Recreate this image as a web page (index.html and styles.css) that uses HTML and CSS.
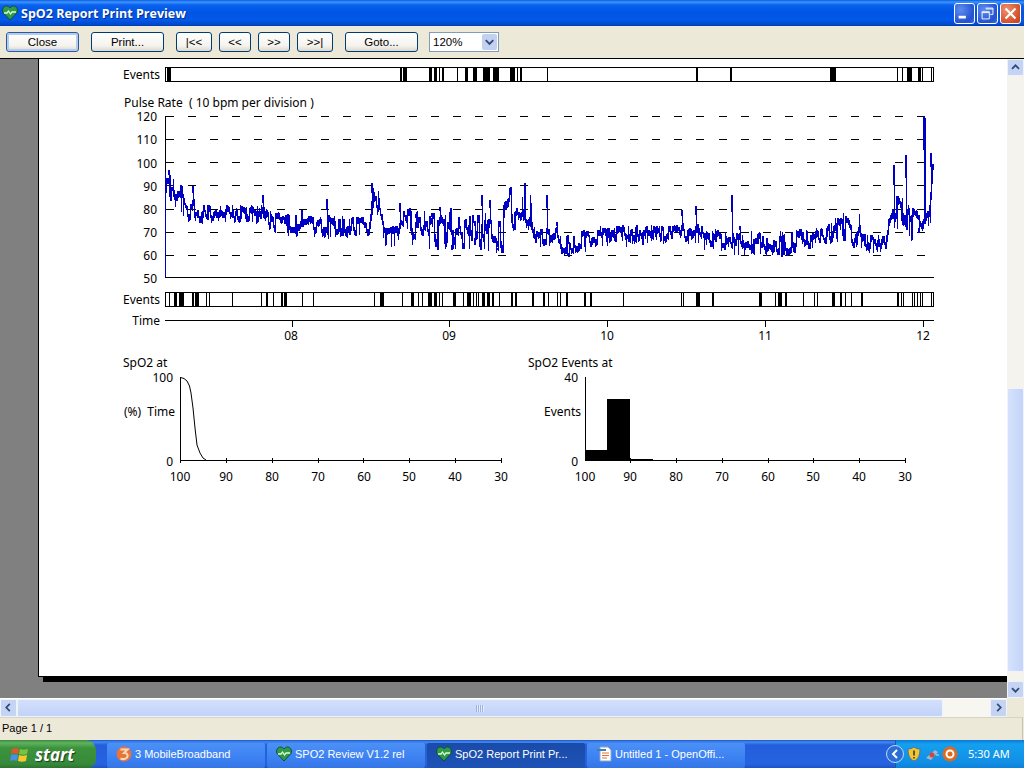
FILE: index.html
```html
<!DOCTYPE html>
<html lang="en">
<head>
<meta charset="utf-8">
<title>SpO2 Report Print Preview</title>
<link rel="stylesheet" href="styles.css">
</head>
<body>
<div class="window">
  <header class="titlebar">
    <svg class="heart" viewBox="0 0 16 16"><path d="M8 15 1 7.500C-.5 4 2 1 4.500 1 6 1 7.300 2 8 3 8.700 2 10 1 11.500 1 14 1 16.500 4 15 7.500Z" fill="#2f9a4c" stroke="#16502e"/><path d="M2 8h3l1.500-2 2 3 1.500-2h4" fill="none" stroke="#d8ffd0" stroke-width="1.300"/></svg>
    <h1 class="title">SpO2 Report Print Preview</h1>
    <div class="winbtns">
      <span class="winbtn"><svg viewBox="0 0 21 21"><rect x="4" y="13" width="8" height="3" fill="#fff"/></svg></span>
      <span class="winbtn"><svg viewBox="0 0 21 21"><path d="M8.500 4.500h8v7h-3M4.500 8.500h8v8h-8z M4.500 9.500h8 M8.500 5.500h8" fill="none" stroke="#fff"/></svg></span>
      <span class="winbtn close"><svg viewBox="0 0 21 21"><path d="M5 5l11 11M16 5 5 16" stroke="#fff" stroke-width="2.400" fill="none"/></svg></span>
    </div>
  </header>

  <nav class="toolbar">
    <button class="btn wide default">Close</button>
    <button class="btn wide">Print...</button>
    <button class="btn first">|&lt;&lt;</button>
    <button class="btn nav">&lt;&lt;</button>
    <button class="btn nav">&gt;&gt;</button>
    <button class="btn last">&gt;&gt;|</button>
    <button class="btn wide">Goto...</button>
    <div class="combo"><span class="combo-val">120%</span><span class="combo-arrow"><svg viewBox="0 0 16 16"><path d="M4 6l4 4 4-4" fill="none" stroke="#2f4a7d" stroke-width="2"/></svg></span></div>
  </nav>

  <main class="viewer">
    <div class="canvas">
      <div class="page">
        <svg class="report" viewBox="40 59 967 617" width="967" height="617">
          <!-- top events -->
          <text class="lbl end" x="160" y="79">Events</text>
          <rect class="box" x="165.500" y="67.500" width="768" height="14"/>
          <path class="evt" d="M167 68h4v13h-4zM400 68h2v13h-2zM403 68h4v13h-4zM429 68h3v13h-3zM434 68h3v13h-3zM439 68h1v13h-1zM442 68h2v13h-2zM457 68h1v13h-1zM465 68h3v13h-3zM473 68h4v13h-4zM483 68h7v13h-7zM493 68h6v13h-6zM510 68h5v13h-5zM517 68h1v13h-1zM520 68h2v13h-2zM547 68h1v13h-1zM696 68h2v13h-2zM730 68h2v13h-2zM830 68h6v13h-6zM897 68h1v13h-1zM902 68h1v13h-1zM907 68h5v13h-5zM918 68h3v13h-3zM922 68h1v13h-1zM931 68h1v13h-1z"/>

          <!-- pulse rate -->
          <text class="lbl pre" x="124" y="107">Pulse Rate  ( 10 bpm per division )</text>
          <g class="lbl end">
            <text x="157" y="121">120</text>
            <text x="157" y="144">110</text>
            <text x="157" y="168">100</text>
            <text x="157" y="191">90</text>
            <text x="157" y="214">80</text>
            <text x="157" y="237">70</text>
            <text x="157" y="260">60</text>
            <text x="157" y="283">50</text>
          </g>
          <path class="dash" d="M166 116.500H933M166 139.500H933M166 162.500H933M166 185.500H933M166 209.500H933M166 232.500H933M166 255.500H933"/>
          <path class="axis" d="M165.500 116V278M165 277.500H934"/>
          <polyline id="trace" class="trace" points=""/>

          <!-- lower events -->
          <text class="lbl end" x="160" y="304">Events</text>
          <rect class="box" x="165.500" y="292.500" width="768" height="14"/>
          <path class="evt" d="M169 293h1v13h-1zM174 293h3v13h-3zM179 293h5v13h-5zM192 293h2v13h-2zM195 293h4v13h-4zM206 293h1v13h-1zM209 293h1v13h-1zM232 293h1v13h-1zM261 293h1v13h-1zM266 293h2v13h-2zM273 293h1v13h-1zM281 293h2v13h-2zM284 293h3v13h-3zM302 293h1v13h-1zM313 293h1v13h-1zM374 293h1v13h-1zM380 293h4v13h-4zM402 293h1v13h-1zM411 293h3v13h-3zM418 293h1v13h-1zM422 293h1v13h-1zM428 293h4v13h-4zM434 293h3v13h-3zM439 293h1v13h-1zM442 293h1v13h-1zM453 293h3v13h-3zM463 293h1v13h-1zM467 293h4v13h-4zM473 293h1v13h-1zM476 293h1v13h-1zM478 293h1v13h-1zM482 293h3v13h-3zM487 293h3v13h-3zM492 293h2v13h-2zM499 293h1v13h-1zM511 293h2v13h-2zM515 293h2v13h-2zM532 293h2v13h-2zM543 293h2v13h-2zM548 293h1v13h-1zM557 293h1v13h-1zM560 293h1v13h-1zM566 293h2v13h-2zM584 293h2v13h-2zM590 293h2v13h-2zM623 293h1v13h-1zM681 293h1v13h-1zM683 293h1v13h-1zM696 293h4v13h-4zM712 293h2v13h-2zM759 293h3v13h-3zM775 293h1v13h-1zM778 293h4v13h-4zM785 293h2v13h-2zM803 293h1v13h-1zM814 293h1v13h-1zM817 293h1v13h-1zM832 293h3v13h-3zM840 293h2v13h-2zM845 293h1v13h-1zM851 293h1v13h-1zM861 293h2v13h-2zM897 293h2v13h-2zM901 293h1v13h-1zM903 293h1v13h-1zM912 293h1v13h-1zM914 293h1v13h-1zM917 293h1v13h-1zM920 293h1v13h-1zM922 293h1v13h-1zM931 293h1v13h-1z"/>

          <!-- time -->
          <text class="lbl end" x="160" y="325">Time</text>
          <path class="axis" d="M165 320.500H934M292.500 320V327M449.500 320V327M607.500 320V327M765.500 320V327M923.500 320V327"/>
          <g class="lbl mid">
            <text x="291" y="340">08</text>
            <text x="449" y="340">09</text>
            <text x="607" y="340">10</text>
            <text x="765" y="340">11</text>
            <text x="923" y="340">12</text>
          </g>

          <!-- SpO2 at -->
          <text class="lbl" x="123" y="367">SpO2 at</text>
          <g class="lbl end">
            <text x="173" y="382">100</text>
            <text class="spaced" x="175" y="416">(%) Time</text>
            <text x="173" y="466">0</text>
          </g>
          <path class="axis" d="M180.500 377V461M180 460.500H501.500M226.500 458V463M272.500 458V463M318.500 458V463M363.500 458V463M409.500 458V463M455.500 458V463M501.500 458V463M180.500 458V463"/>
          <path class="curve" d="M180.500 377.500 184 378.500 187 381 189.500 386 191 393 193 408 195 428 197 445 200 453 203 458 206 460"/>
          <g class="lbl mid">
            <text x="180" y="481">100</text>
            <text x="226" y="481">90</text>
            <text x="272" y="481">80</text>
            <text x="318" y="481">70</text>
            <text x="364" y="481">60</text>
            <text x="409" y="481">50</text>
            <text x="455" y="481">40</text>
            <text x="501" y="481">30</text>
          </g>

          <!-- SpO2 events -->
          <text class="lbl" x="528" y="367">SpO2 Events at</text>
          <g class="lbl end">
            <text x="578" y="382">40</text>
            <text x="581" y="416">Events</text>
            <text x="578" y="466">0</text>
          </g>
          <path class="axis" d="M585.500 377V461M585 460.500H905.500M630.500 458V463M676.500 458V463M722.500 458V463M768.500 458V463M813.500 458V463M859.500 458V463M905.500 458V463"/>
          <path class="evt" d="M585 450h22v10h-22zM607 399h23v61h-23zM630 459h23v1h-23z"/>
          <g class="lbl mid">
            <text x="585" y="481">100</text>
            <text x="630" y="481">90</text>
            <text x="676" y="481">80</text>
            <text x="722" y="481">70</text>
            <text x="768" y="481">60</text>
            <text x="813" y="481">50</text>
            <text x="859" y="481">40</text>
            <text x="905" y="481">30</text>
          </g>
        </svg>
      </div>
    </div>
    <div class="vscroll">
      <span class="sbtn"><svg viewBox="0 0 17 17"><path d="M4.500 10 8.500 6l4 4" fill="none" stroke="#2f4a7d" stroke-width="2"/></svg></span>
      <div class="vtrack"><div class="vthumb"></div></div>
      <span class="sbtn"><svg viewBox="0 0 17 17"><path d="M4.500 7l4 4 4-4" fill="none" stroke="#2f4a7d" stroke-width="2"/></svg></span>
    </div>
  </main>

  <div class="hrow">
    <div class="hscroll">
      <span class="sbtn"><svg viewBox="0 0 17 17"><path d="M10 4.500 6 8.500l4 4" fill="none" stroke="#2f4a7d" stroke-width="2"/></svg></span>
      <div class="hthumb"><span class="grip"></span></div>
      <div class="htrack"></div>
      <span class="sbtn"><svg viewBox="0 0 17 17"><path d="M7 4.500l4 4-4 4" fill="none" stroke="#2f4a7d" stroke-width="2"/></svg></span>
    </div>
    <div class="corner"></div>
  </div>

  <div class="status">Page 1 / 1</div>

  <footer class="taskbar">
    <div class="start">
      <svg class="flag" viewBox="0 0 20 20"><path d="M2 4c2-1 4-1 7 0l-1 5c-2-1-5-1-7 0z" fill="#e2562a"/><path d="M10 4c2 1 5 1 8 0l-1 5c-3 1-5 1-8 0z" fill="#7cc242"/><path d="M1 10c2-1 5-1 7 0l-1 6c-2-1-5-1-7 0z" fill="#4a8fe2"/><path d="M9 10c2 1 5 1 8 0l-1 6c-3 1-5 1-8 0z" fill="#f5c92e"/></svg>
      <span class="start-text">start</span>
    </div>
    <div class="tasks">
      <div class="task"><svg class="ticon" viewBox="0 0 16 16"><circle cx="8" cy="8" r="7.500" fill="#e8743a"/><path d="M4.500 3.500h7L8 7c3 0 4 1.500 3.500 3.500S8 14 4.500 12.500" fill="none" stroke="#fbd9b5" stroke-width="2"/></svg><span>3 MobileBroadband</span></div>
      <div class="task"><svg class="ticon" viewBox="0 0 16 16"><path d="M8 15 1 7.500C-.5 4 2 1 4.500 1 6 1 7.300 2 8 3 8.700 2 10 1 11.500 1 14 1 16.500 4 15 7.500Z" fill="#2f9a4c" stroke="#16502e"/><path d="M2 8h3l1.500-2 2 3 1.500-2h4" fill="none" stroke="#d8ffd0" stroke-width="1.300"/></svg><span>SPO2 Review V1.2 rel</span></div>
      <div class="task active"><svg class="ticon" viewBox="0 0 16 16"><path d="M8 15 1 7.500C-.5 4 2 1 4.500 1 6 1 7.300 2 8 3 8.700 2 10 1 11.500 1 14 1 16.500 4 15 7.500Z" fill="#2f9a4c" stroke="#16502e"/><path d="M2 8h3l1.500-2 2 3 1.500-2h4" fill="none" stroke="#d8ffd0" stroke-width="1.300"/></svg><span>SpO2 Report Print Pr...</span></div>
      <div class="task"><svg class="ticon" viewBox="0 0 16 16"><path d="M4 1h8l3 3v11H4z" fill="#fff" stroke="#8fa4c4"/><path d="M1 3h9v2H1z" fill="#3f7fc4"/><path d="M6 7h7M6 9.500h7M6 12h5" stroke="#e0762c"/></svg><span>Untitled 1 - OpenOffi...</span></div>
    </div>
    <div class="tray">
      <svg class="tchev" viewBox="0 0 18 18"><circle cx="9" cy="9" r="8.500" fill="#2a6fd8" stroke="#bcdcfa"/><path d="M11 5 7 9l4 4" fill="none" stroke="#fff" stroke-width="2"/></svg>
      <svg class="ticon" viewBox="0 0 16 16"><path d="M8 1c2 1.500 4 2 6 2 0 6-1.500 10-6 12C3.500 13 2 9 2 3c2 0 4-.5 6-2z" fill="#f4c62c" stroke="#56709c"/><path d="M8 4.500v5M8 11v1.500" stroke="#3a3a3a" stroke-width="1.600"/></svg>
      <svg class="ticon" viewBox="0 0 16 16"><path d="M2 12 11 4l3 2-7 8z" fill="#a9b4c8"/><circle cx="8" cy="9" r="2.500" fill="#c84a3c"/><path d="M12 9h3" stroke="#d8dee8"/></svg>
      <svg class="ticon" viewBox="0 0 16 16"><circle cx="8" cy="8" r="7.500" fill="#dd6a1e"/><circle cx="8" cy="8" r="3.500" fill="none" stroke="#fff" stroke-width="2"/></svg>
      <time class="clock">5:30 AM</time>
    </div>
  </footer>
</div>
<script src="chart.js"></script>
</body>
</html>
```
FILE: styles.css
```css
* { box-sizing: border-box; }
html, body { margin: 0; padding: 0; }
body { width: 1024px; height: 768px; overflow: hidden; font: 11.500px "Liberation Sans", "Noto Sans", sans-serif; color: #000; }
.window { width: 1024px; height: 768px; display: flex; flex-direction: column; background: #ece9d8; }

.titlebar { height: 26px; flex: none; display: flex; align-items: center; padding: 0 3px 0 2px;
  background: linear-gradient(#0a5be0 0, #3d95ff 2px, #0a62ee 5px, #0055e5 12px, #0258e8 20px, #0047c8 25px, #003aa8 26px); }
.heart { width: 16px; height: 16px; flex: none; }
.title { margin: 0 0 0 3px; font: bold 12.500px "Open Sans", "Noto Sans", sans-serif; color: #fff; text-shadow: 1px 1px 0 #0a2f8c; white-space: nowrap; flex: 1; }
.winbtns { display: flex; gap: 2px; }
.winbtn { width: 21px; height: 21px; border: 1px solid #fff; border-radius: 3px; background: radial-gradient(circle at 30% 30%, #5d8df0, #2452d0 70%, #3a6ae0); display: block; }
.winbtn svg { display: block; width: 19px; height: 19px; }
.winbtn.close { background: radial-gradient(circle at 30% 30%, #ee9070, #d3502a 70%, #c04020); }

.toolbar { height: 33px; flex: none; display: flex; align-items: center; padding: 0 0 1px 6px; background: #ece9d8; border-bottom: 1px solid #000; }
.btn { height: 20px; padding: 0; margin: 0; font: 11.500px "Liberation Sans", "Noto Sans", sans-serif; color: #000; border: 1px solid #003c74; border-radius: 3px; background: linear-gradient(#fff, #f4f3ee 70%, #dcd8cb); }
.btn.wide { width: 73px; margin-right: 12px; }
.btn.first { width: 36px; margin-right: 7px; }
.btn.nav { width: 32px; margin-right: 7px; }
.btn.last { width: 36px; margin-right: 12px; }
.btn.default { border-color: #2c5aa0; box-shadow: inset 0 0 0 2px #b4cbee; }
.combo { width: 70px; height: 20px; margin-left: -1px; display: flex; align-items: center; border: 1px solid #7f9db9; background: #fff; padding: 0 1px 0 3px; font-size: 11.500px; }
.combo-val { flex: 1; }
.combo-arrow { width: 15px; height: 16px; background: #c3d0ef; border-radius: 2px; display: block; }
.combo-arrow svg { display: block; width: 15px; height: 16px; }

.viewer { height: 639px; flex: none; display: flex; background: #808080; }
.canvas { flex: 1; overflow: hidden; padding-left: 38px; }
.page { width: 1000px; height: 618px; padding-left: 1px; background: #fff; border-left: 1px solid #000; border-bottom: 1px solid #000; box-shadow: 5px 5px 0 #000; }
.report { display: block; }
.lbl { font: 12px "Noto Sans", "DejaVu Sans", sans-serif; fill: #000; }
.end, .end text { text-anchor: end; }
.mid text { text-anchor: middle; }
.pre { white-space: pre; }
.spaced { word-spacing: 3px; }
.box { fill: #fff; stroke: #000; shape-rendering: crispEdges; }
.evt { fill: #000; shape-rendering: crispEdges; }
.dash { fill: none; stroke: #000; stroke-dasharray: 8 14.1; shape-rendering: crispEdges; }
.axis { fill: none; stroke: #000; shape-rendering: crispEdges; }
.curve { fill: none; stroke: #000; }
.trace { fill: none; stroke: #0000c4; stroke-width: 1.300; stroke-linejoin: bevel; shape-rendering: crispEdges; }

.vscroll { width: 17px; flex: none; display: flex; flex-direction: column; background: #f4f3ee; }
.vtrack { flex: 1; padding-top: 312px; padding-bottom: 9px; }
.vthumb { height: 100%; background: linear-gradient(90deg, #d6e2fb, #c3d4fa); border: 1px solid #eef3fe; border-radius: 2px; }
.sbtn { width: 17px; height: 17px; flex: none; display: block; background: #c5d4f3; border: 1px solid #eef2fb; border-radius: 2px; }
.sbtn svg { display: block; width: 15px; height: 15px; }

.hrow { height: 19px; flex: none; display: flex; }
.hscroll { flex: 1; display: flex; background: #f4f3ee; border-top: 1px solid #fff; }
.hscroll .sbtn { height: 18px; }
.hthumb { width: 926px; flex: none; display: flex; align-items: center; justify-content: center; background: linear-gradient(#d3e0fb, #c2d3fa); border: 1px solid #eef3fe; border-radius: 2px; }
.grip { width: 8px; height: 7px; background: repeating-linear-gradient(90deg, #9db2dc 0 1px, #e4ecfd 1px 2px); }
.htrack { flex: 1; background: #f7f6f1; }
.corner { width: 17px; background: #ece9d8; }

.status { height: 23px; flex: none; margin-right: 1px; padding: 2px 0 0 2px; line-height: 16px; font-size: 11px; background: #ece9d8; border-top: 1px solid #d8d4c2; border-right: 1px solid #c8c4b4; }

.taskbar { height: 29px; flex: none; display: flex; align-items: stretch; color: #fff;
  background: linear-gradient(#1f4fc8 0, #3f8cf3 2px, #245edb 5px, #2663e0 24px, #1c4fc0 29px); }
.start { width: 96px; flex: none; display: flex; align-items: center; padding-left: 10px; gap: 5px; border-radius: 0 10px 10px 0;
  background: linear-gradient(#3c8a3c 0, #5fb25f 3px, #3c933c 8px, #37893a 24px, #2a6e2c 29px); }
.flag { width: 20px; height: 20px; flex: none; }
.start-text { font: italic bold 17px "Open Sans", "Noto Sans", sans-serif; text-shadow: 1px 1px 1px #1a3f1a; }
.tasks { flex: 1; display: flex; gap: 2px; padding: 3px 0 1px 11px; }
.task { width: 158px; flex: none; display: flex; align-items: center; gap: 3px; padding: 0 0 3px 9px; font-size: 11px; border-radius: 2px; background: linear-gradient(#4c90f5, #3c81f3 60%, #3475e6); white-space: nowrap; overflow: hidden; }
.task.active { background: linear-gradient(#1a4ba8, #1e52b7); }
.ticon { width: 16px; height: 16px; flex: none; }
.tray { width: 129px; flex: none; display: flex; align-items: center; gap: 2px; padding-bottom: 2px; background: linear-gradient(#0c77d8, #14a0ee 4px, #118fe6 22px, #0e7fd8); border-left: 1px solid #0e5cb8; }
.tchev { width: 18px; height: 18px; flex: none; margin-left: -10px; }
.clock { margin-left: 8px; white-space: nowrap; font: 11px "Noto Sans", sans-serif; }
```
FILE: chart.js
```js
(function () {
  var env = [[166,172,192],[172,178,202],[180,185,208],[186,196,218],[195,203,220],[205,208,220],[262,209,220],[268,214,230],[300,219,234],[327,219,236],[369,220,234],[372,190,212],[378,193,214],[381,212,220],[384,230,244],[398,226,242],[401,212,224],[410,210,228],[412,214,244],[503,218,250],[504,205,214],[511,188,198],[512,222,234],[520,198,230],[530,198,228],[533,230,244],[557,230,242],[558,238,254],[587,232,250],[600,229,244],[680,228,240],[683,224,238],[686,232,242],[692,230,240],[698,222,240],[704,232,248],[727,234,248],[733,236,252],[780,234,252],[783,236,254],[800,232,248],[826,230,246],[832,222,242],[838,215,240],[846,218,246],[855,232,247],[859,215,242],[864,238,250],[886,238,248],[888,224,234],[892,213,230],[896,198,226],[905,203,232],[918,213,242],[922,216,238],[926,203,224],[930,198,222],[933,165,172]];
  var spikes = {169:170,193:186,263:195,302:210,327:199,372:183,400:203,416:215,432:213,438:250,440:207,451:208,452:250,475:245,482:195,490:200,498:250,510:188,515:230,525:183,531:203,547:195,557:222,569:257,682:210,696:206,732:195,740:226,782:257,894:165,906:155,919:233,924:116,925:118,931:153};
  var seed = 20240611;
  function rnd() {
    seed |= 0; seed = seed + 0x6D2B79F5 | 0;
    var t = Math.imul(seed ^ seed >>> 15, 1 | seed);
    t = t + Math.imul(t ^ t >>> 7, 61 | t) ^ t;
    return ((t ^ t >>> 14) >>> 0) / 4294967296;
  }
  function band(x) {
    for (var i = 1; i < env.length; i++) {
      if (x <= env[i][0]) {
        var a = env[i - 1], b = env[i], k = (x - a[0]) / (b[0] - a[0]);
        return [a[1] + (b[1] - a[1]) * k, a[2] + (b[2] - a[2]) * k];
      }
    }
    return [env[0][1], env[0][2]];
  }
  var pts = ['165.5,277', '165.5,172'];
  var slow = 0.5, hold = 0;
  for (var x = 166; x <= 933; x++) {
    var b = band(x), w = b[1] - b[0];
    if (hold-- <= 0) { slow = rnd(); hold = Math.floor(rnd() * 3); }
    var c = b[0] + w * slow;
    pts.push(x + ',' + Math.round(c - 2 - rnd() * 2));
    pts.push((x + 0.5) + ',' + Math.round(c + 2 + rnd() * 2));
    if (rnd() < 0.25) {
      pts.push((x + 0.5) + ',' + Math.round(rnd() < 0.5 ? b[0] - rnd() * 4 : b[1] + rnd() * 4));
    }
    if (spikes[x]) { pts.push(x + ',' + spikes[x]); pts.push((x + 0.5) + ',' + Math.round(c)); }
  }
  document.getElementById('trace').setAttribute('points', pts.join(' '));
})();
```
